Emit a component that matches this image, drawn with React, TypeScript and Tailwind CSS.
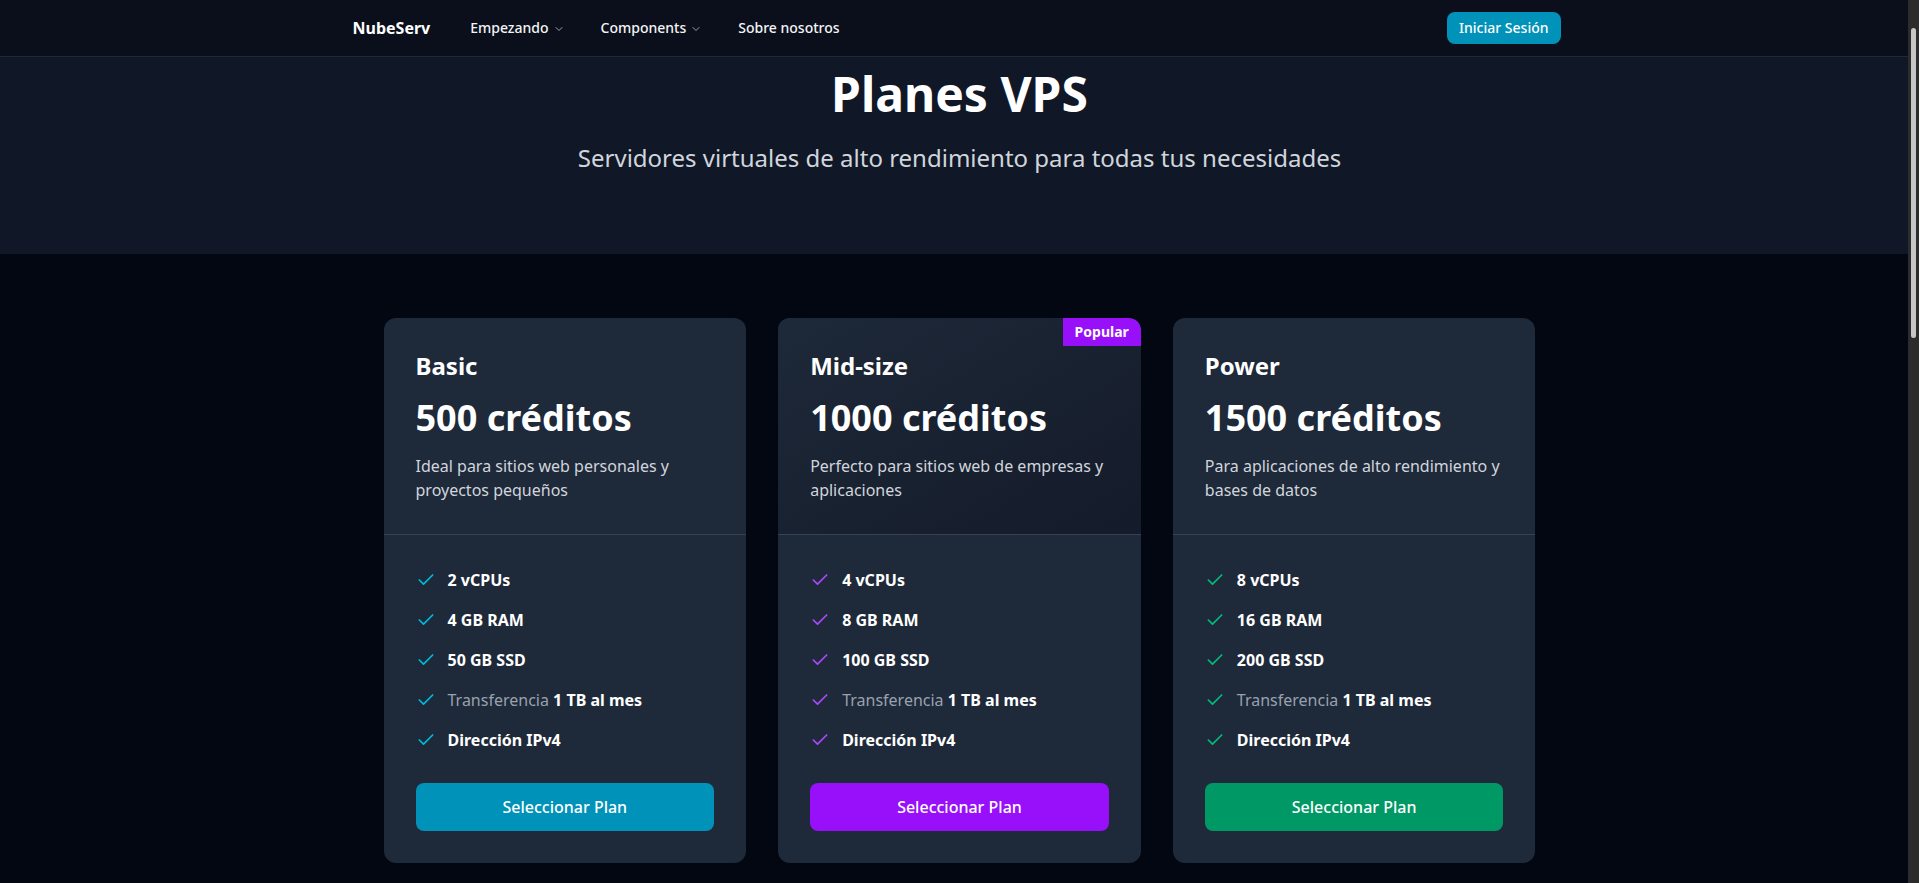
import React from "react";
import { Check, ChevronDown } from "lucide-react";

type Plan = {
  name: string;
  credits: string;
  desc: string;
  cpu: string;
  ram: string;
  ssd: string;
  check: string;
  button: string;
  popular?: boolean;
};

const plans: Plan[] = [
  {
    name: "Basic",
    credits: "500 créditos",
    desc: "Ideal para sitios web personales y proyectos pequeños",
    cpu: "2 vCPUs",
    ram: "4 GB RAM",
    ssd: "50 GB SSD",
    check: "text-cyan-500",
    button: "bg-cyan-600 hover:bg-cyan-700",
  },
  {
    name: "Mid-size",
    credits: "1000 créditos",
    desc: "Perfecto para sitios web de empresas y aplicaciones",
    cpu: "4 vCPUs",
    ram: "8 GB RAM",
    ssd: "100 GB SSD",
    check: "text-purple-500",
    button: "bg-purple-600 hover:bg-purple-700",
    popular: true,
  },
  {
    name: "Power",
    credits: "1500 créditos",
    desc: "Para aplicaciones de alto rendimiento y bases de datos",
    cpu: "8 vCPUs",
    ram: "16 GB RAM",
    ssd: "200 GB SSD",
    check: "text-emerald-500",
    button: "bg-emerald-600 hover:bg-emerald-700",
  },
];

function Feature({ color, children }: { color: string; children: React.ReactNode }) {
  return (
    <li className="flex items-center gap-3 text-base leading-6">
      <Check className={`w-5 h-5 shrink-0 ${color}`} strokeWidth={2} />
      <span>{children}</span>
    </li>
  );
}

function PlanCard({ plan }: { plan: Plan }) {
  return (
    <div className="relative overflow-hidden rounded-xl bg-gray-800 flex flex-col">
      {plan.popular && (
        <div className="absolute top-0 right-0 bg-purple-600 text-white text-sm font-bold px-3 py-1 rounded-tr-xl">
          Popular
        </div>
      )}
      <div
        className={`p-8 border-b border-gray-700 ${
          plan.popular ? "bg-gradient-to-br from-gray-800 to-[#141b2a]" : ""
        }`}
      >
        <h3 className="text-2xl leading-8 font-bold text-white">{plan.name}</h3>
        <p className="mt-4 text-4xl leading-10 font-bold text-white">{plan.credits}</p>
        <p className="mt-4 text-base leading-6 text-gray-300">{plan.desc}</p>
      </div>
      <div className="px-8 pt-[33px] pb-8">
        <ul className="space-y-4 text-white font-bold">
          <Feature color={plan.check}>{plan.cpu}</Feature>
          <Feature color={plan.check}>{plan.ram}</Feature>
          <Feature color={plan.check}>{plan.ssd}</Feature>
          <Feature color={plan.check}>
            <span className="font-normal text-gray-400">Transferencia</span> 1 TB al mes
          </Feature>
          <Feature color={plan.check}>Dirección IPv4</Feature>
        </ul>
        <button
          className={`mt-[31px] w-full h-12 rounded-lg text-white text-base font-medium ${plan.button}`}
        >
          Seleccionar Plan
        </button>
      </div>
    </div>
  );
}

export default function App() {
  return (
    <div className="min-h-[2600px] bg-gray-950 font-['Noto_Sans',sans-serif] text-white">
      <header className="h-[57px] bg-[#0a0f1b] border-b border-gray-800">
        <div className="max-w-7xl mx-auto h-14 pl-[33px] pr-[39px] flex items-center justify-between">
          <div className="flex items-center">
            <span className="text-base font-bold text-white">NubeServ</span>
            <nav className="ml-6 flex items-center gap-1 text-sm font-medium text-gray-100">
              <button className="h-9 px-4 flex items-center">
                Empezando
                <ChevronDown className="ml-1 w-3 h-3 relative top-[1px] text-gray-400" />
              </button>
              <button className="h-9 px-4 flex items-center">
                Components
                <ChevronDown className="ml-1 w-3 h-3 relative top-[1px] text-gray-400" />
              </button>
              <a className="h-9 px-4 flex items-center">Sobre nosotros</a>
            </nav>
          </div>
          <button className="h-8 px-3 rounded-lg bg-cyan-600 text-sm font-medium text-white">
            Iniciar Sesión
          </button>
        </div>
      </header>

      <section className="bg-gray-900 pt-[13px] pb-20 text-center">
        <h1 className="text-5xl leading-none font-bold text-white">Planes VPS</h1>
        <p className="mt-6 text-2xl leading-8 text-gray-300">
          Servidores virtuales de alto rendimiento para todas tus necesidades
        </p>
      </section>

      <section className="py-16">
        <div className="max-w-6xl mx-auto grid grid-cols-3 gap-8">
          {plans.map((p) => (
            <PlanCard key={p.name} plan={p} />
          ))}
        </div>
      </section>

      {/* window scrollbar as seen in the capture */}
      <div className="fixed top-0 right-0 h-screen w-[11px] bg-[#2c2c2c] pt-[28px] px-[3px]">
        <div className="h-[310px] w-full rounded-full bg-[#c6c6c6]" />
      </div>
    </div>
  );
}
